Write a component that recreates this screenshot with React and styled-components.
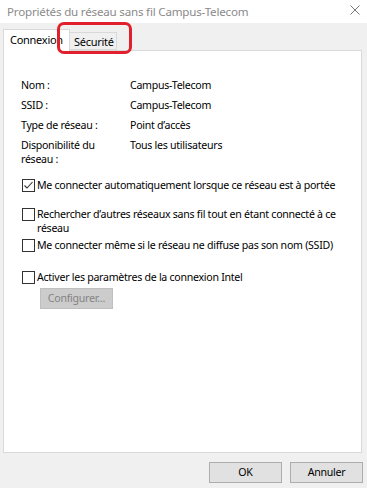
import React from "react";
import styled, { createGlobalStyle } from "styled-components";

const Global = createGlobalStyle`
  html, body { margin: 0; padding: 0; background: #f0f0f0; }
  body {
    font-family: "Segoe UI", "Noto Sans", "Open Sans", sans-serif;
    font-size: 10.6px;
    letter-spacing: -0.27px;
    color: #000;
  }
  * { box-sizing: border-box; }
`;

const Window = styled.div`
  position: relative;
  width: 367px;
  height: 488px;
  background: #f0f0f0;
  display: flex;
  flex-direction: column;
  overflow: hidden;
`;

const TitleBar = styled.div`
  height: 24px;
  background: #fff;
  display: flex;
  align-items: center;
  justify-content: space-between;
  padding: 0 7px 1px 7px;
`;

const Title = styled.div`
  color: #8a8a8a;
  font-size: 11.6px;
  letter-spacing: -0.2px;
  white-space: nowrap;
`;

const CloseIcon = styled.svg`
  width: 10px;
  height: 10px;
  margin-top: -3px;
`;

const Body = styled.div`
  flex: 1;
  display: flex;
  flex-direction: column;
  padding: 6px 5px 5px 3px;
`;

const TabStrip = styled.div`
  display: flex;
  align-items: flex-end;
  height: 22px;
  margin-bottom: -1px;
  position: relative;
  z-index: 1;
`;

const Tab = styled.div`
  height: ${(p) => (p.$active ? "22px" : "18px")};
  margin-bottom: ${(p) => (p.$active ? "0" : "1px")};
  width: ${(p) => p.$w}px;
  background: ${(p) => (p.$active ? "#fff" : "#f0f0f0")};
  border: 1px solid #d9d9d9;
  border-bottom: ${(p) => (p.$active ? "none" : "1px solid #d9d9d9")};
  border-left: ${(p) => (p.$noLeft ? "none" : "1px solid #d9d9d9")};
  padding: ${(p) => (p.$active ? "3px 0 0 6px" : "2px 0 0 4px")};
  line-height: 14px;
  font-size: 11px;
  white-space: nowrap;
  overflow: hidden;
`;

const Panel = styled.div`
  height: 403px;
  background: #fff;
  border: 1px solid #d9d9d9;
  padding: 27px 6px 0 17px;
  display: flex;
  flex-direction: column;
`;

const InfoGrid = styled.div`
  display: grid;
  grid-template-columns: 109px 1fr;
  row-gap: 6px;
  line-height: 14px;
  margin-bottom: 12px;
`;

const Label = styled.div`
  width: 96px;
`;

const Value = styled.div``;

const CheckRow = styled.label`
  display: flex;
  align-items: flex-start;
  gap: 2px;
  line-height: 14px;
  margin-left: 1px;
  margin-top: ${(p) => p.$top || 0}px;
`;

const Box = styled.span`
  flex: none;
  width: 13px;
  height: 13px;
  margin-top: 1px;
  border: 1px solid #333;
  background: #fff;
  display: flex;
  align-items: center;
  justify-content: center;
`;

const CheckText = styled.span``;

const DisabledButton = styled.div`
  width: 73px;
  height: 21px;
  margin: 4px 0 0 19px;
  background: #cccccc;
  border: 1px solid #bfbfbf;
  color: #838383;
  display: flex;
  align-items: center;
  justify-content: center;
  padding-bottom: 1px;
`;

const Footer = styled.div`
  display: flex;
  justify-content: flex-end;
  gap: 8px;
  margin-top: 9px;
  margin-right: -1px;
`;

const Button = styled.div`
  width: 73px;
  height: 21px;
  background: #e1e1e1;
  border: 1px solid #adadad;
  display: flex;
  align-items: center;
  justify-content: center;
  padding-bottom: 1px;
`;

const Highlight = styled.div`
  position: absolute;
  left: 57px;
  top: 22px;
  width: 75px;
  height: 32px;
  border: 3px solid #e0202c;
  border-radius: 7px;
  pointer-events: none;
  z-index: 5;
`;

function Checkbox({ checked, children, top }) {
  return (
    <CheckRow $top={top}>
      <Box>
        {checked && (
          <svg width="11" height="11" viewBox="0 0 11 11">
            <path d="M1.5 5.5 L4 8 L9.5 2" fill="none" stroke="#333" strokeWidth="1.1" />
          </svg>
        )}
      </Box>
      <CheckText>{children}</CheckText>
    </CheckRow>
  );
}

export default function App() {
  return (
    <Window>
      <Global />
      <TitleBar>
        <Title>Propriétés du réseau sans fil Campus-Telecom</Title>
        <CloseIcon viewBox="0 0 10 10">
          <path d="M0.5 0.5 L9.5 9.5 M9.5 0.5 L0.5 9.5" stroke="#777" strokeWidth="1" fill="none" />
        </CloseIcon>
      </TitleBar>
      <Body>
        <TabStrip>
          <Tab $active $w={67}>Connexion</Tab>
          <Tab $w={47} $noLeft>Sécurité</Tab>
        </TabStrip>
        <Panel>
          <InfoGrid>
            <Label>Nom :</Label>
            <Value>Campus-Telecom</Value>
            <Label>SSID :</Label>
            <Value>Campus-Telecom</Value>
            <Label>Type de réseau :</Label>
            <Value>Point d’accès</Value>
            <Label>Disponibilité du réseau :</Label>
            <Value>Tous les utilisateurs</Value>
          </InfoGrid>
          <Checkbox checked>Me connecter automatiquement lorsque ce réseau est à portée</Checkbox>
          <Checkbox top={15}>Rechercher d’autres réseaux sans fil tout en étant connecté à ce réseau</Checkbox>
          <Checkbox top={3}>Me connecter même si le réseau ne diffuse pas son nom (SSID)</Checkbox>
          <Checkbox top={18}>Activer les paramètres de la connexion Intel</Checkbox>
          <DisabledButton>Configurer…</DisabledButton>
        </Panel>
        <Footer>
          <Button>OK</Button>
          <Button>Annuler</Button>
        </Footer>
      </Body>
      <Highlight />
    </Window>
  );
}
